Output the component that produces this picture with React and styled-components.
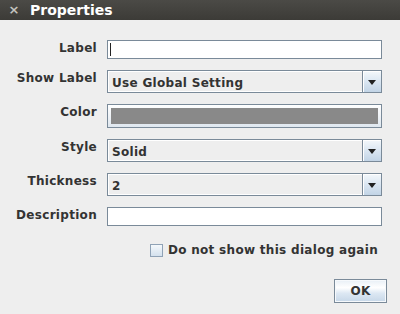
import React from "react";
import styled, { createGlobalStyle } from "styled-components";

const Global = createGlobalStyle`
  html, body { margin: 0; padding: 0; background: #eeeeee; }
  body { width: 400px; height: 314px; overflow: hidden; font-family: "DejaVu Sans", "Liberation Sans", sans-serif; }
`;

const Window = styled.div`
  width: 400px;
  height: 314px;
  display: flex;
  flex-direction: column;
  background: #eeeeee;
`;

const TitleBar = styled.div`
  height: 20px;
  flex: none;
  display: flex;
  align-items: center;
  background: linear-gradient(#4b4a46, #3c3b37);
  color: #fff;
`;

const Close = styled.span`
  width: 28px;
  text-align: center;
  font-size: 13px;
  font-weight: bold;
  color: #c4c4c0;
  line-height: 20px;
`;

const Title = styled.span`
  margin-left: 2px;
  font-size: 14px;
  font-weight: bold;
  line-height: 20px;
  color: #ffffff;
`;

const Body = styled.div`
  flex: 1;
  display: flex;
  flex-direction: column;
  padding: 20px 18px 0 0;
`;

const Form = styled.div`
  display: grid;
  grid-template-columns: 97px 1fr;
  column-gap: 10px;
  row-gap: 11px;
`;

const FieldLabel = styled.div`
  align-self: start;
  text-align: right;
  font-size: 12px;
  letter-spacing: 0.3px;
  font-weight: bold;
  line-height: 16px;
  color: #333333;
`;

const TextField = styled.div`
  height: 17px;
  border: 1px solid #7a8a99;
  background: #ffffff;
  display: flex;
  align-items: center;
  padding-left: 2px;
`;

const Caret = styled.span`
  width: 1px;
  height: 13px;
  background: #222;
`;

const Combo = styled.div`
  height: 21px;
  border: 1px solid #7a8a99;
  background: #eeeeee;
  display: flex;
  align-items: stretch;
`;

const ComboText = styled.div`
  flex: 1;
  display: flex;
  align-items: center;
  padding: 2px 0 0 3px;
  font-size: 12px;
  letter-spacing: 0.3px;
  font-weight: bold;
  color: #333333;
  border: 1px solid #ffffff;
  border-right: none;
`;

const ArrowButton = styled.div`
  width: 18px;
  border-left: 1px solid #7a8a99;
  background: linear-gradient(#f4f8fb 0%, #dde8f3 45%, #c2d4e6 100%);
  display: flex;
  align-items: center;
  justify-content: center;
  box-shadow: inset 1px 1px 0 #ffffff;
`;

const Arrow = styled.span`
  width: 0;
  height: 0;
  border-left: 4px solid transparent;
  border-right: 4px solid transparent;
  border-top: 5px solid #222222;
  margin-top: 1px;
`;

const ColorBox = styled.div`
  box-sizing: border-box;
  height: 24px;
  border: 1px solid #7a8a99;
  background: linear-gradient(#ffffff, #dfe7ef);
  padding: 3px;
  display: flex;
`;

const Swatch = styled.div`
  flex: 1;
  background: #898989;
`;

const CheckRow = styled.label`
  display: flex;
  align-items: center;
  justify-content: flex-end;
  gap: 5px;
  height: 16px;
  margin-top: 16px;
  padding-right: 4px;
  font-size: 12px;
  letter-spacing: 0.3px;
  font-weight: bold;
  color: #333333;
`;

const Box = styled.span`
  width: 11px;
  height: 11px;
  border: 1px solid #8fa2b6;
  background: linear-gradient(#f4f8fb, #d4e1ee);
`;

const Footer = styled.div`
  display: flex;
  justify-content: flex-end;
  margin-top: 21px;
  margin-right: -5px;
`;

const Button = styled.button`
  width: 53px;
  height: 24px;
  border: 1px solid #7a8a99;
  background: linear-gradient(#e8eff6 0%, #ffffff 35%, #dde8f3 60%, #c6d7e8 100%);
  font-family: "DejaVu Sans", sans-serif;
  font-size: 12px;
  letter-spacing: 0.3px;
  font-weight: bold;
  color: #333333;
  padding: 0;
  box-shadow: inset 0 0 0 1px #f6f9fc;
`;

function ComboField({ value }) {
  return (
    <Combo>
      <ComboText>{value}</ComboText>
      <ArrowButton>
        <Arrow />
      </ArrowButton>
    </Combo>
  );
}

export default function App() {
  return (
    <Window>
      <Global />
      <TitleBar>
        <Close>×</Close>
        <Title>Properties</Title>
      </TitleBar>
      <Body>
        <Form>
          <FieldLabel>Label</FieldLabel>
          <TextField>
            <Caret />
          </TextField>

          <FieldLabel>Show Label</FieldLabel>
          <ComboField value="Use Global Setting" />

          <FieldLabel>Color</FieldLabel>
          <ColorBox>
            <Swatch />
          </ColorBox>

          <FieldLabel>Style</FieldLabel>
          <ComboField value="Solid" />

          <FieldLabel>Thickness</FieldLabel>
          <ComboField value="2" />

          <FieldLabel>Description</FieldLabel>
          <TextField />
        </Form>
        <CheckRow>
          <Box />
          Do not show this dialog again
        </CheckRow>
        <Footer>
          <Button>OK</Button>
        </Footer>
      </Body>
    </Window>
  );
}
